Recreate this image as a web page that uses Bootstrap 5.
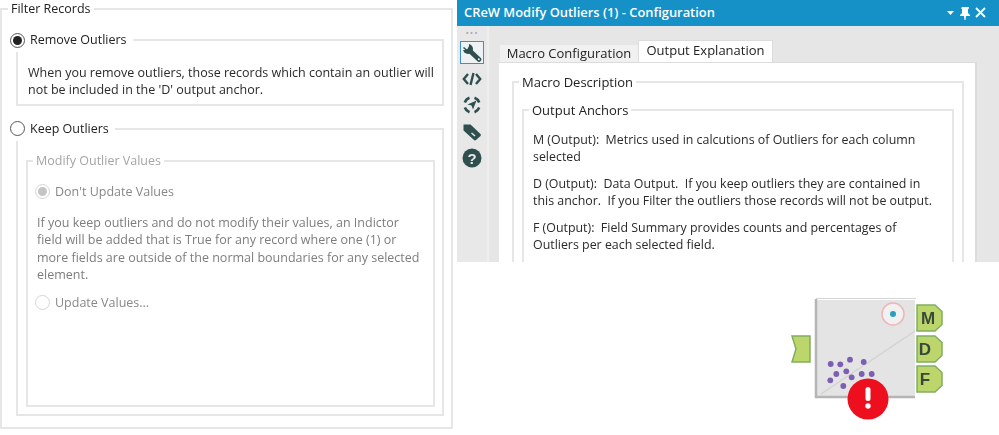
<!DOCTYPE html>
<html lang="en"><head><meta charset="utf-8"><title>CReW Modify Outliers</title>
<link href="https://cdn.jsdelivr.net/npm/bootstrap@5.3.0/dist/css/bootstrap.min.css" rel="stylesheet">
<style>
html,body{margin:0;height:435px;overflow:hidden;background:#fff}
body{font-family:"Open Sans","Noto Sans",sans-serif;font-size:12.5px;line-height:17.4px;color:#2a2a2a}
.shot{width:999px;height:435px;filter:blur(.35px)}
.fs{border:2px solid #e6e6e6;margin:0;padding:0;min-width:0}
.lg{float:none;width:auto;margin:0;padding:0 3px;font-size:12.5px;line-height:18px;height:18px;color:#222}
.lgr{height:24px;padding:0 6px 0 0;display:flex;align-items:center;gap:5px}
.rd{width:15px;height:15px;border-radius:50%;border:1.5px solid #555;background:#fff;flex:none;display:flex;align-items:center;justify-content:center}
.rd i{width:9px;height:9px;border-radius:50%;background:#222;display:block}
.off{color:#7d7d7d}.off .lg{color:#a5a5a5}.off .rd{border-color:#d4d4d4}.off .rd i{background:#c4c4c4}
.outer{width:453px;height:429px;padding:0 7px 0 14px}
.outer>.lg{margin-left:-8px}
.b1{margin-top:10px;padding:0 6px 5px 10px}
.b1>.lg{margin-left:-18px}
.b1 p{margin:12px 0 0}
.b2{margin-top:11px;padding:0 7px 7px 8px}
.b2>.lg{margin-left:-16px}
.inner{margin-top:11px;padding:0 10px 93px 9px}
.inner>.lg{margin-left:-4px}
.rowr{display:flex;align-items:center;gap:5px;height:20px;margin:12px 0 0 -2px;color:#888}
.inner p{margin:12px 0 0}
.inner p+.rowr{margin-top:9px}
.left{width:457px;flex:none}
.right{width:542px;flex:none}
.panel{height:262px;background:#e6e6e6;overflow:hidden}
.ttl{height:26px;flex:none;background:#1591c7;color:#fff;font-weight:600;font-size:12.9px;padding:0 9px 0 7px}
.side{width:32px;background:#e8e8e8;border-right:2px solid #eee;padding-top:2px;flex:none}
.dots{height:13px;color:#aaa;font-size:9px;line-height:10px;text-align:center;letter-spacing:1px}
.tool{width:24px;height:24px;margin:0 auto;display:flex;align-items:center;justify-content:center;margin-bottom:2.6px}
.tool.sel{outline:1.5px solid #3d8fd0;outline-offset:-1px;background:#eef2f5;height:23px}
.body{flex:1;min-width:0;padding:14px 22px 0 10px;display:flex;flex-direction:column}
.nav-tabs.tabsx{border:0;align-items:flex-end;height:22px;margin-left:1px;flex:none}
.tabx{font-size:13px;line-height:17px;height:17px;width:138px;background:#f1f1f1;color:#222;text-align:center;text-decoration:none}
.tabx.on{height:22px;width:135px;background:#fff;line-height:19px;border:1px solid #dcdcdc;border-bottom:0}
.pane{flex:1;background:#fff;border:solid #dcdcdc;border-width:1px 2px 0 0;padding:10px 11px 0 13px;min-height:0;font-size:12.4px}
.pane .lg{font-size:13px}
.f1{height:300px;padding:0 8px}
.f1>.lg{margin-left:-3px}
.f2>.lg{margin-left:-4px}
.f2{margin-top:10px;height:300px;padding:0 13px 0 9px}
.f2 p{margin:0 0 9px;white-space:pre-wrap}
.f2 p:first-of-type{margin-top:12px}
.nodew{display:block;margin:23px 0 0 323px;filter:blur(.6px)}
</style></head><body>
<div class="shot d-flex">
<div class="left">
<fieldset class="fs outer"><legend class="lg">Filter Records</legend>
<fieldset class="fs b1"><legend class="lg lgr"><span class="rd"><i></i></span>Remove Outliers</legend>
<p>When you remove outliers, those records which contain an outlier will not be included in the 'D' output anchor.</p></fieldset>
<fieldset class="fs b2"><legend class="lg lgr"><span class="rd"></span>Keep Outliers</legend>
<fieldset class="fs inner off"><legend class="lg">Modify Outlier Values</legend>
<div class="rowr"><span class="rd"><i></i></span>Don't Update Values</div>
<p>If you keep outliers and do not modify their values, an Indictor field will be added that is True for any record where one (1) or more fields are outside of the normal boundaries for any selected element.</p>
<div class="rowr"><span class="rd"></span>Update Values...</div>
</fieldset></fieldset></fieldset>
</div>
<div class="right d-flex flex-column">
<div class="panel d-flex flex-column">
<div class="ttl d-flex align-items-center justify-content-between"><span>CReW Modify Outliers (1) - Configuration</span>
<svg width="44" height="14" viewBox="0 0 44 14" fill="#fff" aria-hidden="true"><path d="M1 5h7L4.500 9z"/><path d="M16 1h7v1.500l-1 .5v4l2 2v1h-4l-.5 4h-1l-.5-4h-4V9l2-2V3l-1-.5z"/><path d="M30 2l9 9M39 2l-9 9" stroke="#fff" stroke-width="1.800" fill="none"/></svg></div>
<div class="d-flex flex-grow-1" style="min-height:0">
<div class="side"><div class="dots">•••</div>
<div class="tool sel"><svg width="20" height="20" viewBox="0 0 20 20" aria-hidden="true"><path d="M8 8L17 16.500" stroke="#2f4f4f" stroke-width="4.600" stroke-linecap="round"/><circle cx="6" cy="6" r="5" fill="#2f4f4f"/><path d="M0 0H7V3L5.500 6 3 7H0z" fill="#eef2f5"/><path d="M1.500 4.500L4.500 7" stroke="#2f4f4f" stroke-width="1.500"/><circle cx="16.800" cy="16.300" r="1" fill="#eef2f5"/></svg></div>
<div class="tool"><svg width="20" height="16" viewBox="0 0 20 16" aria-hidden="true"><path d="M6 3L1.800 8 6 13M14 3l4.200 5L14 13M11.500 2L8.500 14" fill="none" stroke="#2f4f4f" stroke-width="2.400"/></svg></div>
<div class="tool"><svg width="20" height="20" viewBox="0 0 20 20" aria-hidden="true"><path d="M2.800 7.500A8 8 0 0 1 7.500 2.800M12.500 2.800A8 8 0 0 1 17.200 7.500M17.200 12.500A8 8 0 0 1 12.500 17.200M7.500 17.200A8 8 0 0 1 2.800 12.500" fill="none" stroke="#2f4f4f" stroke-width="2.600"/><path d="M14.500 5.500L11 14.500 9.500 10.500 5.500 9.500z" fill="#2f4f4f"/></svg></div>
<div class="tool"><svg width="20" height="20" viewBox="0 0 20 20" aria-hidden="true"><path d="M1.500 2.500h7L18.500 12a1.500 1.500 0 0 1 0 2L14 18a1.500 1.500 0 0 1-2 0L1.500 8.500z" fill="#2f4f4f"/><path d="M9.500 11l3.500 3" stroke="#e8e8e8" stroke-width="1.500"/></svg></div>
<div class="tool"><svg width="20" height="20" viewBox="0 0 20 20" aria-hidden="true"><circle cx="10" cy="10" r="9.500" fill="#2f4f4f"/><text x="10" y="15.500" text-anchor="middle" font-family="Liberation Sans" font-weight="700" font-size="15" fill="#e8e8e8">?</text></svg></div>
</div>
<div class="body">
<div class="nav nav-tabs tabsx"><a class="tabx" href="#">Macro Configuration</a><a class="tabx on" href="#">Output Explanation</a></div>
<div class="pane">
<fieldset class="fs f1"><legend class="lg">Macro Description</legend>
<fieldset class="fs f2"><legend class="lg">Output Anchors</legend>
<p>M (Output):  Metrics used in calcutions of Outliers for each column selected</p>
<p>D (Output):  Data Output.  If you keep outliers they are contained in this anchor.  If you Filter the outliers those records will not be output.</p>
<p>F (Output):  Field Summary provides counts and percentages of Outliers per each selected field.</p>
</fieldset></fieldset>
</div></div></div></div>
<svg class="nodew" width="170" height="150" viewBox="780 285 170 150" aria-hidden="true">
<rect x="817" y="300" width="98" height="97" fill="#e4e4e4"/>
<path d="M816 299v98h99" fill="none" stroke="#b5b5b5" stroke-width="2.500"/><path d="M816 298.500h100" stroke="#d4d4d4"/>
<path d="M821 394L915 331" stroke="#d2d2d2" stroke-width="1.300"/>
<circle cx="893" cy="314" r="11" fill="#f1f1f1" stroke="#eeb6b8" stroke-width="1.500"/><circle cx="893" cy="314" r="3" fill="#2a9fc0"/>
<g fill="#7c5fb3"><circle cx="830.700" cy="364" r="2.900"/><circle cx="840.300" cy="364.300" r="2.900"/><circle cx="850" cy="359.700" r="2.900"/><circle cx="863.700" cy="362" r="2.900"/><circle cx="836.300" cy="374" r="2.900"/><circle cx="846.300" cy="371.300" r="2.900"/><circle cx="851.700" cy="377.300" r="2.900"/><circle cx="861.700" cy="374" r="2.900"/><circle cx="871.700" cy="374" r="2.900"/><circle cx="830.300" cy="380.300" r="2.900"/><circle cx="843.300" cy="386" r="2.900"/></g>
<g fill="#bdd66c" stroke="#7fae62" stroke-width="1.500"><path d="M917 305h18l7 6.500v13l-7 6.500h-18z"/><path d="M917 336h18l7 6.500v13l-7 6.500h-18z"/><path d="M917 366h18l7 6.500v13l-7 6.500h-18z"/><path d="M792 336h18v26h-18l4-13z"/></g>
<g font-family="Liberation Sans" font-weight="700" font-size="17" fill="#37493a" text-anchor="middle"><text x="928" y="324">M</text><text x="925" y="355">D</text><text x="925" y="385">F</text></g>
<circle cx="868" cy="399" r="20.500" fill="#ee0f1e"/><rect x="865.500" y="387" width="5" height="14" rx="2.500" fill="#fff"/><circle cx="868" cy="406" r="2.700" fill="#fff"/>
</svg>
</div></div>
</body></html>
